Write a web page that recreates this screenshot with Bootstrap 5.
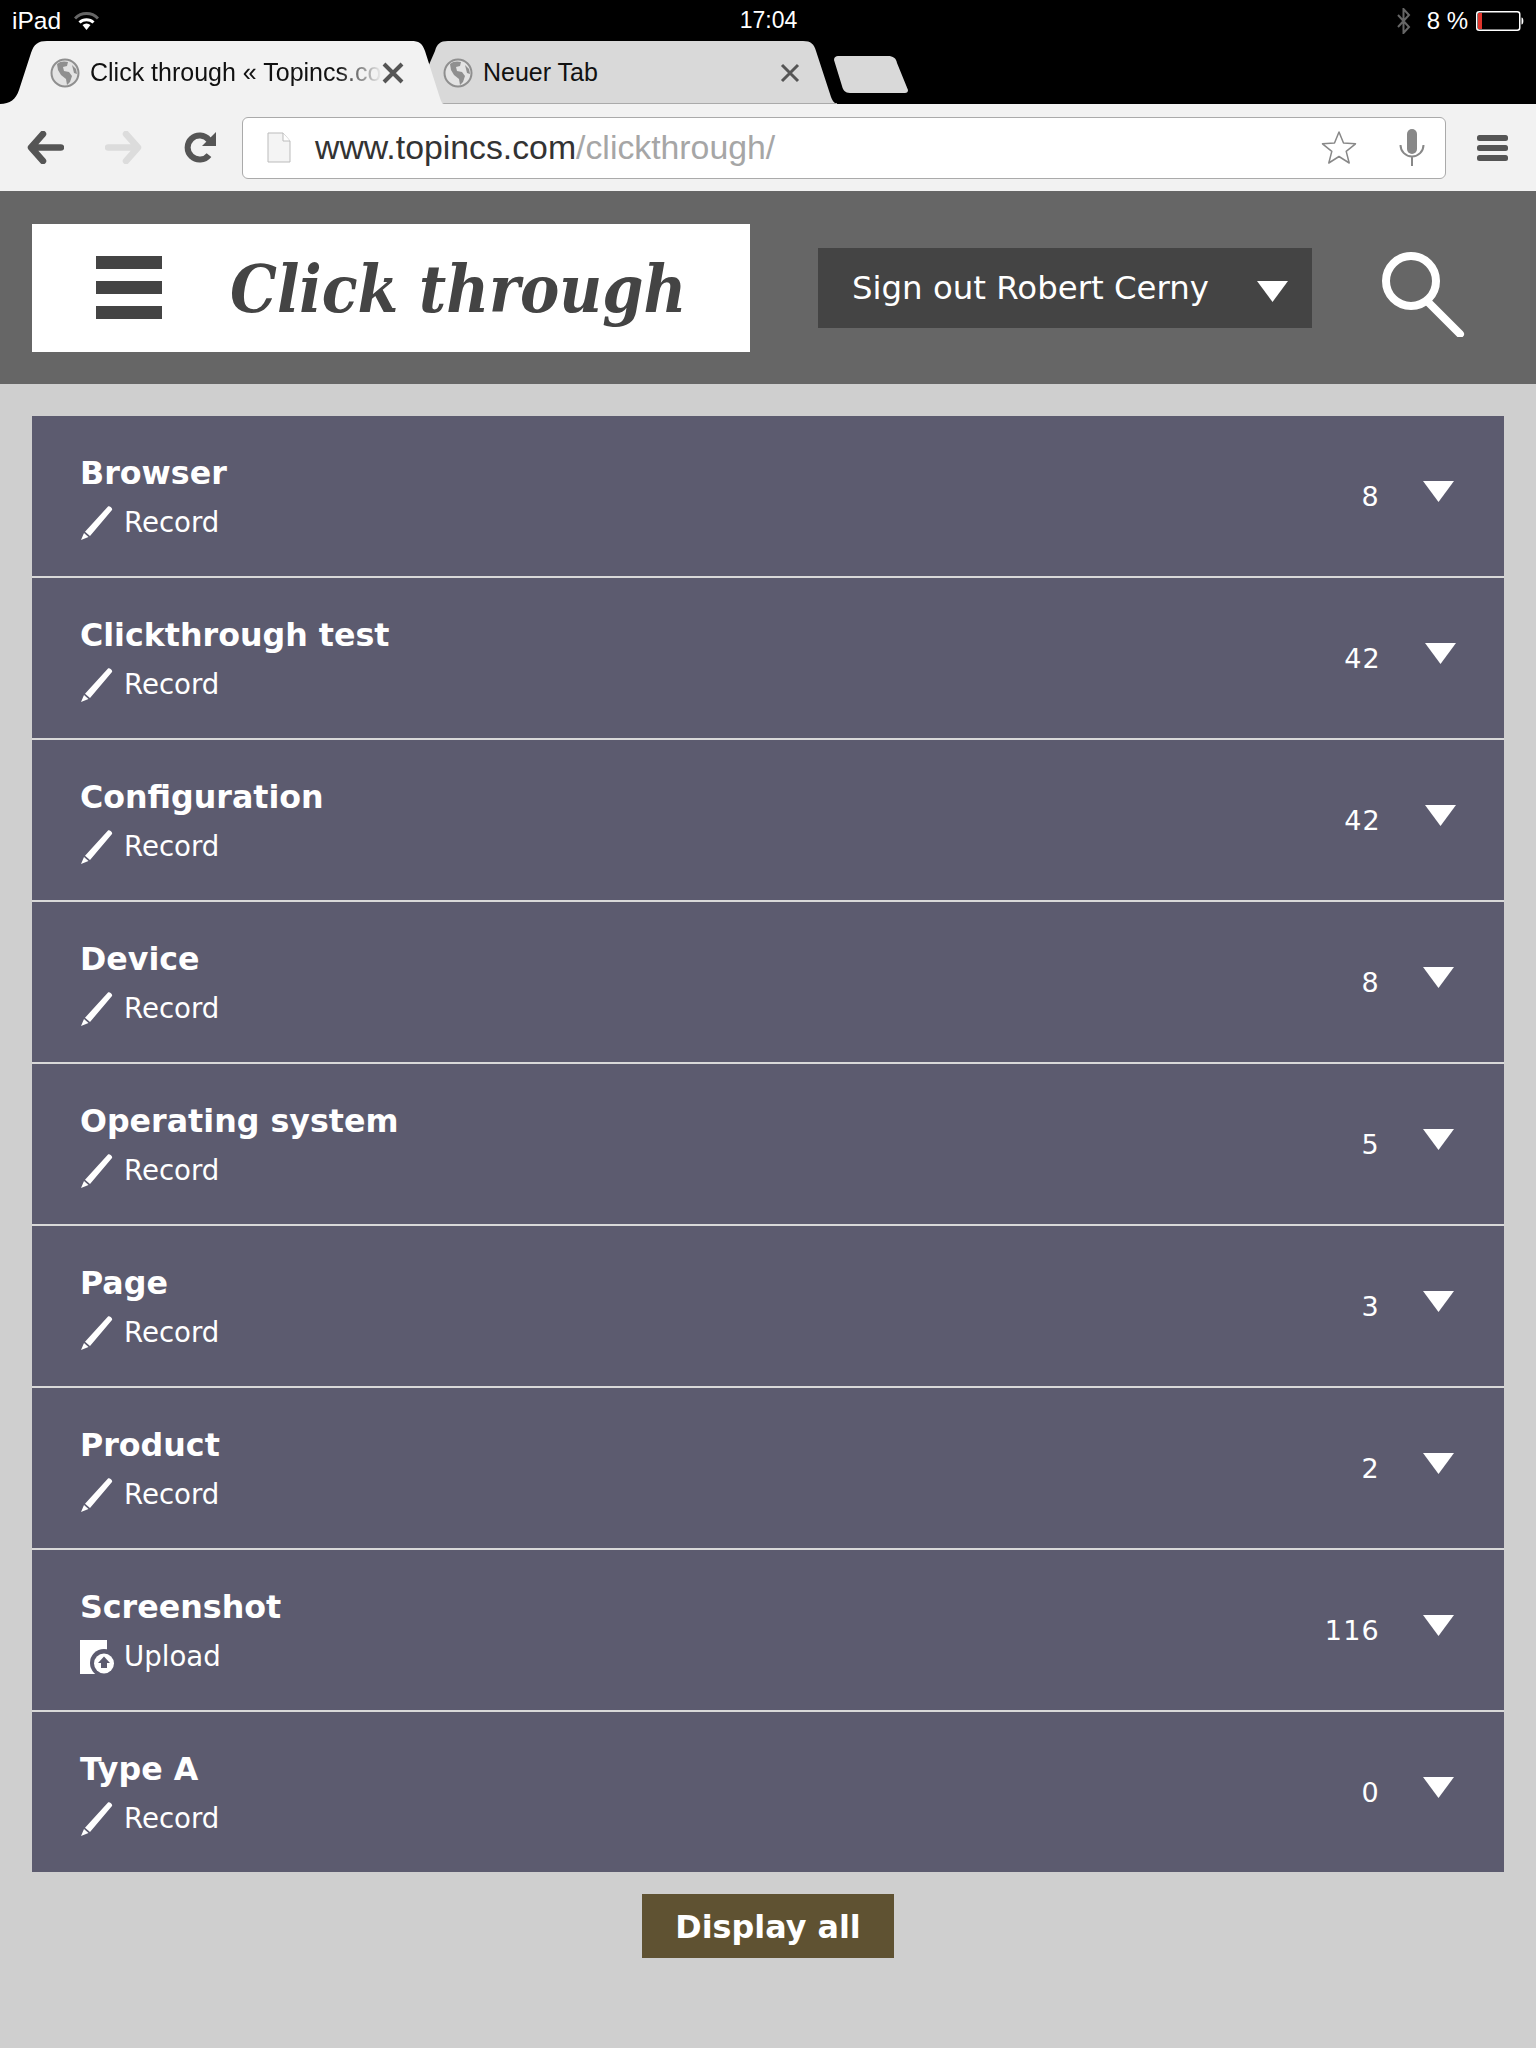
<!DOCTYPE html>
<html lang="en">
<head>
    <meta charset="UTF-8">
    <title>Click through « Topincs.com</title>
    <link href="https://cdn.jsdelivr.net/npm/bootstrap@5.3.0/dist/css/bootstrap.min.css" rel="stylesheet">
    <style>
        body { background: #cfcfcf; min-height: 2048px; font-family: "DejaVu Sans", sans-serif; }
        .ios-bar { height: 41px; background: #000; color: #fff; font: 23px "Liberation Sans", sans-serif; padding: 0 11px 0 12px; }
        .ios-side { width: 400px; }
        .ios-carrier { font-size: 24.5px; margin-right: 5px; }
        .ios-pct { font-size: 24px; }
        .tab-strip { height: 63px; background: #000; }
        .tab-item { position: relative; height: 63px; font: 25px "Liberation Sans", sans-serif; color: #111; }
        .tab-item > svg.tab-shape { position: absolute; left: 0; top: 0; overflow: visible; }
        .tab-body { position: relative; height: 63px; }
        .tab-one { width: 443px; z-index: 1; }
        .tab-two { width: 404px; margin-left: -8px; }
        .tab-title { white-space: nowrap; overflow: hidden; }
        .tab-one .tab-body { padding: 0 0 0 50px; }
        .tab-two .tab-body { padding: 0 0 0 8px; }
        .tab-one .tab-title { width: 292px; margin-left: 10px; -webkit-mask-image: linear-gradient(90deg, #000 85%, transparent 100%); }
        .tab-two .tab-title { margin-left: 10px; width: 297px; }
        .new-tab { margin: 15px 0 0 -5px; }
        .tool-bar { height: 87px; background: #f2f2f2; padding-left: 27px; }
        .tool-fwd { margin-left: 41px; }
        .tool-rel { margin-left: 42px; }
        .url-box { width: 1204px; height: 62px; background: #fff; border: 1px solid #aaa; border-radius: 6px; margin-left: 25px; padding: 0 20px 0 24px; }
        .url-text { font: 33.8px "Liberation Sans", sans-serif; color: #333; margin-left: 24px; }
        .url-text span { color: #a6a6a6; }
        .star-ico { margin-right: 42px; }
        .menu-ico { margin-left: 31px; }
        .site-head { height: 193px; background: #666; padding: 0 32px; }
        .logo-box { width: 718px; height: 128px; background: #fff; padding-left: 64px; }
        .logo-bars { width: 66px; }
        .logo-bars i { display: block; height: 13px; background: #444; margin-bottom: 12px; }
        .logo-bars i:last-child { margin-bottom: 0; }
        .logo-text { font: italic 700 65.5px "DejaVu Serif", serif; font-stretch: condensed; color: #444; margin: 2px 0 0 68px; line-height: 1; white-space: nowrap; }
        .sign-btn { width: 494px; height: 80px; background: #444; color: #fff; border: 0; border-radius: 0; margin-left: 68px; padding: 2px 24px 0 34px; font-size: 32.4px; line-height: 1; }
        .sign-btn svg { margin-top: 5px; }
        .sign-btn:hover, .sign-btn:active { background: #444 !important; color: #fff !important; }
        .search-ico { margin: 12px 0 0 69px; }
        .rows-wrap { padding: 32px 32px 0 32px; }
        .topic-list { border-radius: 0; }
        .topic-row.list-group-item { height: 162px; background: #5c5b6f; color: #fff; border: 0; border-bottom: 2px solid #d9d9d9; border-radius: 0; padding: 2px 50px 0 48px; }
        .topic-row.list-group-item:last-child { height: 160px; border-bottom: 0; }
        .topic-name { font-weight: 700; font-size: 31.7px; line-height: 40px; margin-top: -1px; }
        .topic-act { font-size: 27.6px; line-height: 36px; margin-top: 12px; }
        .topic-act svg { margin-right: 10px; }
        .topic-num { font-size: 27px; letter-spacing: 1.2px; margin-right: 43px; }
        .topic-tri { margin-top: -11px; }
        .wide-num { padding-right: 48px !important; }
        .wide-num .topic-num { margin-right: 44px; }
        .show-all { width: 252px; height: 64px; background: #5f5232; color: #fff; border: 0; border-radius: 0; font-weight: 700; font-size: 31.8px; padding: 2px 0 0; margin-top: 22px; }
        .show-all:hover, .show-all:active { background: #5f5232 !important; color: #fff !important; }
    </style>
</head>
<body>
    <svg width="0" height="0" class="d-block">
        <symbol id="pen" viewBox="0 0 34 34"><path d="M28 .5c1.500-1 5 2 4 3.500L10 30 5 25.800z M4 27l4.500 4-7.500 3z" fill="#fff"/></symbol>
        <symbol id="globe" viewBox="0 0 30 30"><circle cx="15" cy="15" r="13.5" fill="#e3e3e3" stroke="#8f8f8f" stroke-width="2"/><path d="M7 6c3-3 8-3 11-2l-1 4-4 1 1 4 5 1 3 4-2 6-3 3-1-6-5-4-3-5z M22 7l4 4 1 5-3-1z" fill="#8f8f8f"/></symbol>
        <symbol id="tri" viewBox="0 0 31 21"><path d="M0 0h31L15.5 21z" fill="#fff"/></symbol>
    </svg>

    <div class="ios-bar d-flex align-items-center justify-content-between">
        <div class="ios-side d-flex align-items-center gap-2">
            <span class="ios-carrier">iPad</span>
            <svg width="25" height="18" viewBox="0 0 25 18"><path d="M1 6.5a16 16 0 0 1 23 0" fill="none" stroke="#666" stroke-width="3"/><path d="M5.5 10.5a10 10 0 0 1 14 0" fill="none" stroke="#fff" stroke-width="3"/><path d="M8.5 13a6 6 0 0 1 8 0l-4 5z" fill="#fff"/></svg>
        </div>
        <span>17:04</span>
        <div class="ios-side d-flex align-items-center justify-content-end">
            <svg width="15" height="26" viewBox="0 0 15 26" class="me-3"><path d="M2 7l11 12-5.5 6V1L13 7 2 19" fill="none" stroke="#666" stroke-width="2"/></svg>
            <span class="me-2 ios-pct">8 %</span>
            <svg width="49" height="20" viewBox="0 0 49 20"><rect x=".75" y=".75" width="43" height="18.5" rx="2.5" fill="none" stroke="#fff" stroke-width="1.5"/><rect x="2" y="2" width="4" height="16" fill="#e0342b"/><path d="M45.5 6.5c2.500 0 2.500 7 0 7z" fill="#fff"/></svg>
        </div>
    </div>

    <div class="tab-strip d-flex">
        <div class="tab-item tab-one">
            <svg class="tab-shape" width="443" height="63" viewBox="0 0 443 63"><path d="M0 63c10 0 16-5 19-14L31 12C34 3 38 0 47 0h364c8 0 11 2 14 10l14 44c2 6 3 9 5 9z" fill="#f2f2f2"/></svg>
            <div class="tab-body d-flex align-items-center">
                <svg width="30" height="30"><use href="#globe"/></svg>
                <div class="tab-title">Click through « Topincs.com</div>
                <svg width="22" height="22" viewBox="0 0 22 22"><path d="M2 2l18 18M20 2L2 20" stroke="#555" stroke-width="4"/></svg>
            </div>
        </div>
        <div class="tab-item tab-two">
            <svg class="tab-shape" width="404" height="63" viewBox="0 0 404 63"><path d="M-7 26L0 10C2 3 5 0 13 0h355c8 0 11 3 13 10l15 46c2 5 4 7 8 7H0z" fill="#d9d9d9"/><path d="M0 62.500h402" stroke="#aaa"/></svg>
            <div class="tab-body d-flex align-items-center">
                <svg width="30" height="30"><use href="#globe"/></svg>
                <div class="tab-title">Neuer Tab</div>
                <svg width="20" height="20" viewBox="0 0 20 20"><path d="M2 2l16 16M18 2L2 18" stroke="#555" stroke-width="3"/></svg>
            </div>
        </div>
        <svg class="new-tab" width="75" height="37" viewBox="0 0 75 37"><path d="M0 4c0-3 2-4 4-4h50c5 0 8 2 9 7l11 27c0 2-1 3-3 3H16c-5 0-7-3-8-7z" fill="#d9d9d9"/></svg>
    </div>

    <div class="tool-bar d-flex align-items-center">
        <svg width="37" height="33" viewBox="0 0 37 33"><path d="M16 3L4 16.500l12 13.500M5 16.500h29" fill="none" stroke="#555" stroke-width="6.500" stroke-linecap="round" stroke-linejoin="round"/></svg>
        <svg class="tool-fwd" width="37" height="33" viewBox="0 0 37 33"><path d="M21 3l12 13.500L21 30M32 16.500H3" fill="none" stroke="#dcdcdc" stroke-width="6.500" stroke-linecap="round" stroke-linejoin="round"/></svg>
        <svg class="tool-rel" width="33" height="33" viewBox="0 0 33 33"><path d="M25 24a12 12 0 1 1 0-15" fill="none" stroke="#555" stroke-width="6"/><path d="M32 1v14H18z" fill="#555"/></svg>
        <div class="url-box d-flex align-items-center">
            <svg width="24" height="31" viewBox="0 0 24 31"><path d="M1 1h15l7 8v21H1z" fill="#f4f4f4" stroke="#bbb"/><path d="M16 1v8h7" fill="#fff" stroke="#bbb"/></svg>
            <div class="url-text flex-grow-1">www.topincs.com<span>/clickthrough/</span></div>
            <svg class="star-ico" width="36" height="35" viewBox="0 0 36 35"><path d="M18 2l4.500 11 12 .8-9.300 7.600 3 11.600L18 26.500 7.800 33l3-11.600L1.500 13.800l12-.8z" fill="#fff" stroke="#888" stroke-width="1.500" stroke-linejoin="round"/></svg>
            <svg width="26" height="37" viewBox="0 0 26 37"><rect x="8" y="0" width="10" height="25" rx="5" fill="#888"/><path d="M1.500 16a11.500 11.500 0 0 0 23 0M13 27.500V37" fill="none" stroke="#888" stroke-width="2"/></svg>
        </div>
        <svg class="menu-ico" width="31" height="26" viewBox="0 0 31 26"><rect y="0" width="31" height="6" rx="2.500" fill="#555"/><rect y="10" width="31" height="6" rx="2.500" fill="#555"/><rect y="20" width="31" height="6" rx="2.500" fill="#555"/></svg>
    </div>

    <header class="site-head d-flex align-items-center">
        <div class="logo-box d-flex align-items-center">
            <div class="logo-bars"><i></i><i></i><i></i></div>
            <h1 class="logo-text">Click through</h1>
        </div>
        <button type="button" class="btn sign-btn d-flex align-items-center justify-content-between">
            <span>Sign out Robert Cerny</span>
            <svg width="31" height="21"><use href="#tri"/></svg>
        </button>
        <svg class="search-ico" width="84" height="86" viewBox="0 0 84 86"><circle cx="30" cy="30" r="25" fill="none" stroke="#fff" stroke-width="8"/><path d="M48 52l31 31" stroke="#fff" stroke-width="8" stroke-linecap="round"/></svg>
    </header>

    <main class="rows-wrap">
        <div class="list-group topic-list">
            <div class="list-group-item topic-row d-flex align-items-center">
                <div class="flex-grow-1"><div class="topic-name">Browser</div><div class="topic-act d-flex align-items-center"><svg width="34" height="34"><use href="#pen"/></svg>Record</div></div>
                <span class="topic-num">8</span><svg class="topic-tri" width="31" height="21"><use href="#tri"/></svg>
            </div>
            <div class="list-group-item topic-row wide-num d-flex align-items-center">
                <div class="flex-grow-1"><div class="topic-name">Clickthrough test</div><div class="topic-act d-flex align-items-center"><svg width="34" height="34"><use href="#pen"/></svg>Record</div></div>
                <span class="topic-num">42</span><svg class="topic-tri" width="31" height="21"><use href="#tri"/></svg>
            </div>
            <div class="list-group-item topic-row wide-num d-flex align-items-center">
                <div class="flex-grow-1"><div class="topic-name">Configuration</div><div class="topic-act d-flex align-items-center"><svg width="34" height="34"><use href="#pen"/></svg>Record</div></div>
                <span class="topic-num">42</span><svg class="topic-tri" width="31" height="21"><use href="#tri"/></svg>
            </div>
            <div class="list-group-item topic-row d-flex align-items-center">
                <div class="flex-grow-1"><div class="topic-name">Device</div><div class="topic-act d-flex align-items-center"><svg width="34" height="34"><use href="#pen"/></svg>Record</div></div>
                <span class="topic-num">8</span><svg class="topic-tri" width="31" height="21"><use href="#tri"/></svg>
            </div>
            <div class="list-group-item topic-row d-flex align-items-center">
                <div class="flex-grow-1"><div class="topic-name">Operating system</div><div class="topic-act d-flex align-items-center"><svg width="34" height="34"><use href="#pen"/></svg>Record</div></div>
                <span class="topic-num">5</span><svg class="topic-tri" width="31" height="21"><use href="#tri"/></svg>
            </div>
            <div class="list-group-item topic-row d-flex align-items-center">
                <div class="flex-grow-1"><div class="topic-name">Page</div><div class="topic-act d-flex align-items-center"><svg width="34" height="34"><use href="#pen"/></svg>Record</div></div>
                <span class="topic-num">3</span><svg class="topic-tri" width="31" height="21"><use href="#tri"/></svg>
            </div>
            <div class="list-group-item topic-row d-flex align-items-center">
                <div class="flex-grow-1"><div class="topic-name">Product</div><div class="topic-act d-flex align-items-center"><svg width="34" height="34"><use href="#pen"/></svg>Record</div></div>
                <span class="topic-num">2</span><svg class="topic-tri" width="31" height="21"><use href="#tri"/></svg>
            </div>
            <div class="list-group-item topic-row d-flex align-items-center">
                <div class="flex-grow-1"><div class="topic-name">Screenshot</div><div class="topic-act d-flex align-items-center"><svg width="34" height="34" viewBox="0 0 34 34"><path d="M0 0h27v34H0z" fill="#fff"/><circle cx="24" cy="23" r="14" fill="#5c5b6f"/><circle cx="24" cy="23.500" r="10" fill="#fff"/><path d="M24 16.500l6 6.500h-3v5h-6v-5h-3z" fill="#5c5b6f"/></svg>Upload</div></div>
                <span class="topic-num">116</span><svg class="topic-tri" width="31" height="21"><use href="#tri"/></svg>
            </div>
            <div class="list-group-item topic-row d-flex align-items-center">
                <div class="flex-grow-1"><div class="topic-name">Type A</div><div class="topic-act d-flex align-items-center"><svg width="34" height="34"><use href="#pen"/></svg>Record</div></div>
                <span class="topic-num">0</span><svg class="topic-tri" width="31" height="21"><use href="#tri"/></svg>
            </div>
        </div>
        <div class="text-center"><button type="button" class="btn show-all">Display all</button></div>
    </main>
    <script src="https://cdn.jsdelivr.net/npm/bootstrap@5.3.0/dist/js/bootstrap.bundle.min.js"></script>
</body>
</html>
